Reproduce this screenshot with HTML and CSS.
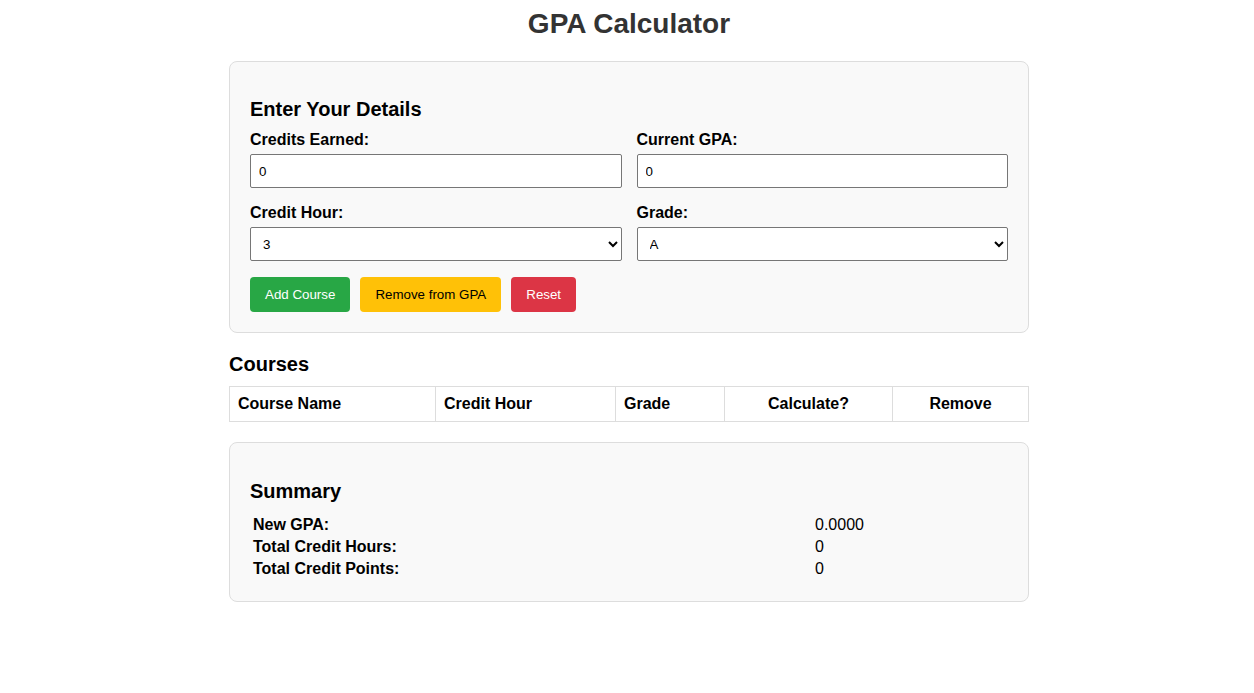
FILE: index.html
```html
<!DOCTYPE html>
<html lang="en">
<head>
<meta charset="utf-8">
<title>GPA Calculator</title>
<link rel="stylesheet" href="styles.css">
</head>
<body>
<h1 class="title">GPA Calculator</h1>
<div class="wrap">
  <section class="card details">
    <h3 class="card-heading">Enter Your Details</h3>
    <div class="grid">
      <div class="field">
        <label class="label" for="credits">Credits Earned:</label>
        <input class="control" id="credits" type="number" value="0">
      </div>
      <div class="field">
        <label class="label" for="gpa">Current GPA:</label>
        <input class="control" id="gpa" type="number" value="0">
      </div>
      <div class="field">
        <label class="label" for="hour">Credit Hour:</label>
        <select class="control" id="hour">
          <option>1</option><option>2</option><option selected>3</option><option>4</option>
        </select>
      </div>
      <div class="field">
        <label class="label" for="grade">Grade:</label>
        <select class="control" id="grade">
          <option selected>A</option><option>A-</option><option>B+</option><option>B</option>
        </select>
      </div>
    </div>
    <div class="buttons">
      <button class="btn btn-green">Add Course</button>
      <button class="btn btn-yellow">Remove from GPA</button>
      <button class="btn btn-red">Reset</button>
    </div>
  </section>

  <h3 class="section-heading">Courses</h3>
  <table class="courses">
    <colgroup>
      <col class="c1"><col class="c2"><col class="c3"><col class="c4"><col class="c5">
    </colgroup>
    <thead>
      <tr>
        <th>Course Name</th>
        <th>Credit Hour</th>
        <th>Grade</th>
        <th class="center">Calculate?</th>
        <th class="center">Remove</th>
      </tr>
    </thead>
    <tbody></tbody>
  </table>

  <section class="card summary">
    <h3 class="card-heading">Summary</h3>
    <table class="sum-table">
      <tr><td class="sum-label">New GPA:</td><td>0.0000</td></tr>
      <tr><td class="sum-label">Total Credit Hours:</td><td>0</td></tr>
      <tr><td class="sum-label">Total Credit Points:</td><td>0</td></tr>
    </table>
  </section>
</div>
</body>
</html>
```

FILE: styles.css
```css
body {
  margin: 0;
  padding: 8px 0 40px 4px;
  font-family: "Liberation Sans", Arial, sans-serif;
  color: #000;
  background: #fff;
}

.title {
  text-align: center;
  font-size: 28px;
  line-height: 32px;
  color: #333;
  margin: 0 0 21px;
}

.wrap {
  width: 800px;
  margin: 0 auto;
}

.card {
  background: #f9f9f9;
  border: 1px solid #ddd;
  border-radius: 8px;
  padding: 36px 20px 20px;
}

.summary {
  margin-top: 20px;
  padding-top: 37px;
}

.card-heading,
.section-heading {
  font-size: 20px;
  line-height: 23px;
  margin: 0 0 10px;
}

.section-heading {
  margin: 20px 0 10px;
}

.grid {
  display: grid;
  grid-template-columns: 1fr 1fr;
  column-gap: 15px;
  row-gap: 16px;
}

.label {
  display: block;
  font-weight: bold;
  font-size: 16px;
  line-height: 18px;
  margin-bottom: 5px;
}

.control {
  display: block;
  width: 100%;
  box-sizing: border-box;
  height: 34px;
  padding: 0 8px;
  font-family: "Liberation Sans", Arial, sans-serif;
  font-size: 13.33px;
  color: #000;
  background: #fff;
  border: 1px solid #767676;
  border-radius: 2px;
}

.buttons {
  display: flex;
  gap: 10px;
  margin-top: 16px;
}

.btn {
  font-family: "Liberation Sans", Arial, sans-serif;
  font-size: 13.33px;
  line-height: 15px;
  padding: 10px 15px;
  border: none;
  border-radius: 4px;
  color: #fff;
}

.btn-green { background: #28a745; }
.btn-yellow { background: #ffc107; color: #000; }
.btn-red { background: #dc3545; }

.courses {
  width: 800px;
  border-collapse: collapse;
  table-layout: fixed;
  background: #fff;
}

.c1 { width: 206px; }
.c2 { width: 180px; }
.c3 { width: 109px; }
.c4 { width: 168px; }
.c5 { width: 136px; }

.courses th {
  border: 1px solid #ddd;
  padding: 8px;
  font-size: 16px;
  line-height: 18px;
  text-align: left;
}

.courses th.center {
  text-align: center;
}

.sum-table {
  width: 100%;
  border-spacing: 2px;
  font-size: 16px;
}

.sum-table td {
  padding: 1px;
}

.sum-label {
  width: 558px;
  font-weight: bold;
}
```
